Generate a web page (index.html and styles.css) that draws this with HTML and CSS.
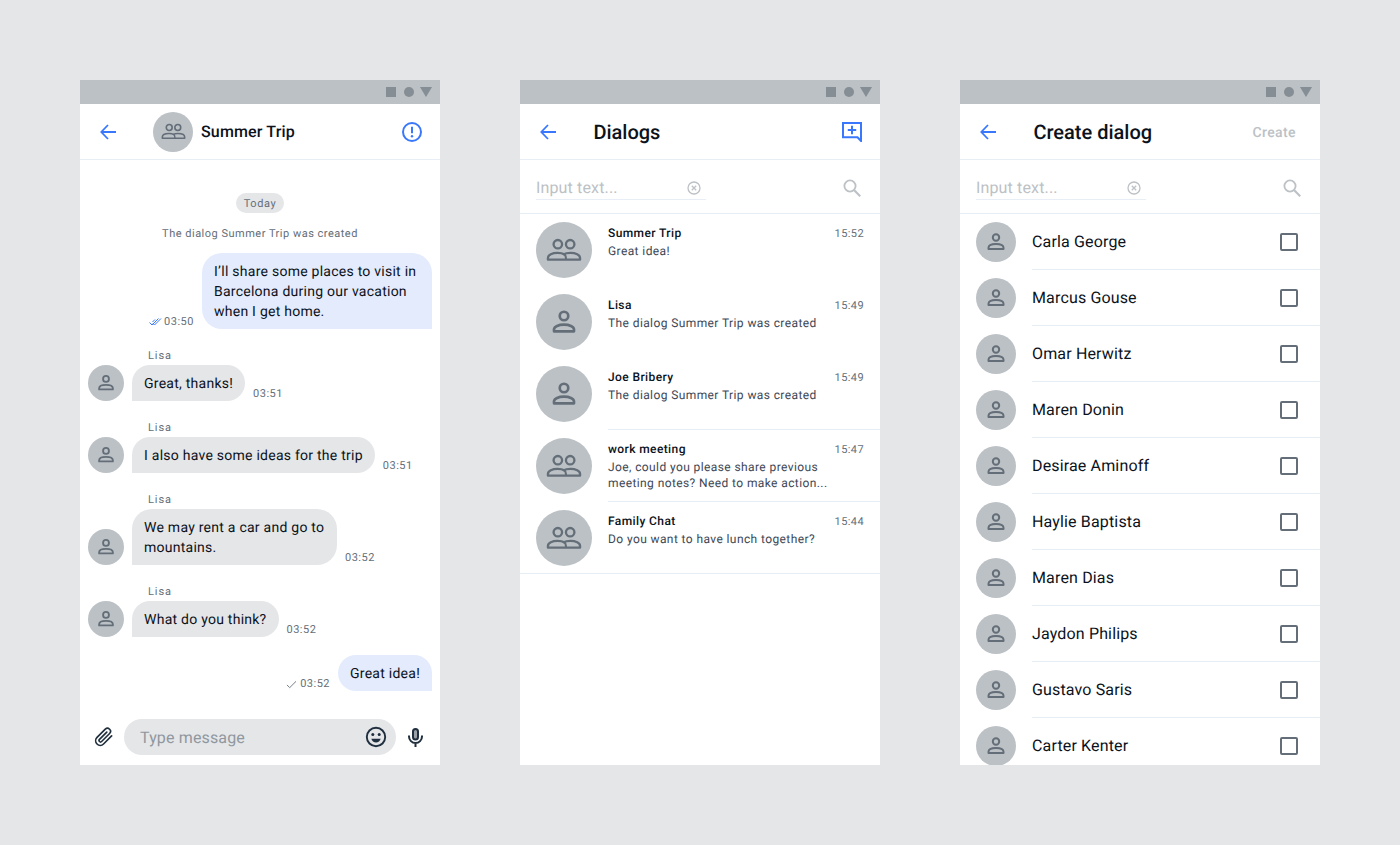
FILE: index.html
```html
<!DOCTYPE html>
<html lang="en">
<head>
<meta charset="utf-8">
<title>Chat screens</title>
<link rel="stylesheet" href="styles.css">
</head>
<body>
<svg class="defs" width="0" height="0" aria-hidden="true">
  <symbol id="person" viewBox="0 0 24 24">
    <circle cx="12" cy="7.500" r="3.200" fill="none" stroke="currentColor" stroke-width="2"/>
    <path d="M4.500 19v-1.300c0-2.400 3.600-3.700 7.500-3.700s7.500 1.300 7.500 3.700V19z" fill="none" stroke="currentColor" stroke-width="2" stroke-linejoin="round"/>
  </symbol>
  <symbol id="group" viewBox="0 0 28 28">
    <circle cx="9.200" cy="9.500" r="3.300" fill="none" stroke="currentColor" stroke-width="1.800"/>
    <circle cx="18.800" cy="9.500" r="3.300" fill="none" stroke="currentColor" stroke-width="1.800"/>
    <path d="M1.500 21.500v-1.300c0-2.500 3.500-3.900 7.500-3.900 2.400 0 4.300.5 5 1 .7-.5 2.600-1 5-1 4 0 7.500 1.400 7.500 3.900v1.300z" fill="none" stroke="currentColor" stroke-width="1.800" stroke-linejoin="round"/>
    <path d="M14 17.300c1 .6 1.500 1.500 1.500 2.900v1.300" fill="none" stroke="currentColor" stroke-width="1.600"/>
  </symbol>
  <symbol id="back" viewBox="0 0 16 16">
    <path d="M16 8H1.500M8 1 1.300 8 8 15" fill="none" stroke="currentColor" stroke-width="1.800"/>
  </symbol>
  <symbol id="search" viewBox="0 0 18 18">
    <circle cx="7" cy="7" r="5.600" fill="none" stroke="currentColor" stroke-width="1.800"/>
    <path d="M11 11 17.200 17.200" fill="none" stroke="currentColor" stroke-width="2.100"/>
  </symbol>
  <symbol id="clear" viewBox="0 0 14 14">
    <circle cx="7" cy="7" r="6" fill="none" stroke="currentColor" stroke-width="1.300"/>
    <path d="M4.800 4.800 9.200 9.200M9.200 4.800 4.800 9.200" fill="none" stroke="currentColor" stroke-width="1.300"/>
  </symbol>
  <symbol id="tick" viewBox="0 0 12 10">
    <path d="M1 5.500 4 8.500 11 1.500" fill="none" stroke="currentColor" stroke-width="1"/>
  </symbol>
  <symbol id="ticks" viewBox="0 0 14 10">
    <path d="M.5 5.500 3 8 9.500 1.500M4 6.500 5.500 8 12 1.500M3.500 5 6 2.500" fill="none" stroke="currentColor" stroke-width="1"/>
  </symbol>
</svg>

<main class="stage">

  <section class="phone">
    <div class="status"><span class="st-square"></span><span class="st-circle"></span><span class="st-tri"></span></div>
    <header class="head head-chat">
      <svg class="ic-back"><use href="#back"/></svg>
      <span class="avatar av-40"><svg class="gl-25"><use href="#group"/></svg></span>
      <h2 class="chat-title">Summer Trip</h2>
      <svg class="ic-info" viewBox="0 0 20 20">
        <circle cx="10" cy="10" r="9" fill="none" stroke="currentColor" stroke-width="2"/>
        <path d="M10 4.800v6.400" fill="none" stroke="currentColor" stroke-width="2"/>
        <circle cx="10" cy="14.300" r="1.200" fill="currentColor"/>
      </svg>
    </header>
    <div class="thread">
      <div class="date-row"><span class="date-pill">Today</span></div>
      <p class="system">The dialog Summer Trip was created</p>

      <div class="msg-out">
        <span class="time"><svg class="ticks"><use href="#ticks"/></svg>03:50</span>
        <div class="bubble out">I’ll share some places to visit in Barcelona during our vacation when I get home.</div>
      </div>

      <div class="msg-in">
        <span class="avatar av-36"><svg class="gl-22"><use href="#person"/></svg></span>
        <div class="msg-body">
          <span class="sender">Lisa</span>
          <div class="bubble-line"><div class="bubble in">Great, thanks!</div><span class="time">03:51</span></div>
        </div>
      </div>

      <div class="msg-in">
        <span class="avatar av-36"><svg class="gl-22"><use href="#person"/></svg></span>
        <div class="msg-body">
          <span class="sender">Lisa</span>
          <div class="bubble-line"><div class="bubble in">I also have some ideas for the trip</div><span class="time">03:51</span></div>
        </div>
      </div>

      <div class="msg-in">
        <span class="avatar av-36"><svg class="gl-22"><use href="#person"/></svg></span>
        <div class="msg-body">
          <span class="sender">Lisa</span>
          <div class="bubble-line"><div class="bubble in w-205">We may rent a car and go to mountains.</div><span class="time">03:52</span></div>
        </div>
      </div>

      <div class="msg-in">
        <span class="avatar av-36"><svg class="gl-22"><use href="#person"/></svg></span>
        <div class="msg-body">
          <span class="sender">Lisa</span>
          <div class="bubble-line"><div class="bubble in">What do you think?</div><span class="time">03:52</span></div>
        </div>
      </div>

      <div class="msg-out">
        <span class="time"><svg class="tick"><use href="#tick"/></svg>03:52</span>
        <div class="bubble out">Great idea!</div>
      </div>
    </div>
    <footer class="composer">
      <svg class="ic-clip" viewBox="0 0 24 24"><path d="M20.300 10.800 11.500 19.600a5 5 0 0 1-7.100-7.100l9-9a3.300 3.300 0 0 1 4.700 4.700l-8.700 8.700a1.600 1.600 0 0 1-2.300-2.300l7.900-7.900" fill="none" stroke="currentColor" stroke-width="1.800" stroke-linecap="round"/></svg>
      <div class="composer-input">
        <span class="composer-text">Type message</span>
        <svg class="ic-emoji" viewBox="0 0 22 22">
          <circle cx="11" cy="11" r="9.200" fill="none" stroke="currentColor" stroke-width="1.900"/>
          <circle cx="7.800" cy="8.500" r="1.500" fill="currentColor"/>
          <circle cx="14.200" cy="8.500" r="1.500" fill="currentColor"/>
          <path d="M6.300 12.800h9.400c-.6 2.300-2.500 3.700-4.700 3.700s-4.100-1.400-4.700-3.700z" fill="currentColor"/>
        </svg>
      </div>
      <svg class="ic-mic" viewBox="0 0 15 19">
        <rect x="5" y="1" width="5" height="10.500" rx="2.500" fill="currentColor" fill-opacity=".45" stroke="currentColor" stroke-width="2"/>
        <path d="M1 7.500v1a6.500 6.500 0 0 0 13 0v-1M7.500 15v4" fill="none" stroke="currentColor" stroke-width="2"/>
      </svg>
    </footer>
  </section>

  <section class="phone">
    <div class="status"><span class="st-square"></span><span class="st-circle"></span><span class="st-tri"></span></div>
    <header class="head">
      <svg class="ic-back"><use href="#back"/></svg>
      <h1 class="title">Dialogs</h1>
      <svg class="ic-new" viewBox="0 0 20 20">
        <path d="M1 1h18v18l-3.500-3.800H1z" fill="none" stroke="currentColor" stroke-width="2"/>
        <path d="M10 3.800v8.400M5.800 8h8.400" fill="none" stroke="currentColor" stroke-width="2"/>
      </svg>
    </header>
    <div class="searchbar">
      <div class="search-field"><span class="search-text">Input text...</span><svg class="ic-clear"><use href="#clear"/></svg></div>
      <svg class="ic-search"><use href="#search"/></svg>
    </div>
    <ul class="dialogs">
      <li class="dialog">
        <span class="avatar av-56"><svg class="gl-36"><use href="#group"/></svg></span>
        <div class="dialog-main">
          <div class="dialog-top"><span class="dialog-name">Summer Trip</span><span class="dialog-time">15:52</span></div>
          <p class="dialog-text">Great idea!</p>
        </div>
      </li>
      <li class="dialog">
        <span class="avatar av-56"><svg class="gl-32"><use href="#person"/></svg></span>
        <div class="dialog-main">
          <div class="dialog-top"><span class="dialog-name">Lisa</span><span class="dialog-time">15:49</span></div>
          <p class="dialog-text">The dialog Summer Trip was created</p>
        </div>
      </li>
      <li class="dialog">
        <span class="avatar av-56"><svg class="gl-32"><use href="#person"/></svg></span>
        <div class="dialog-main line">
          <div class="dialog-top"><span class="dialog-name">Joe Bribery</span><span class="dialog-time">15:49</span></div>
          <p class="dialog-text">The dialog Summer Trip was created</p>
        </div>
      </li>
      <li class="dialog">
        <span class="avatar av-56"><svg class="gl-36"><use href="#group"/></svg></span>
        <div class="dialog-main line">
          <div class="dialog-top"><span class="dialog-name">work meeting</span><span class="dialog-time">15:47</span></div>
          <p class="dialog-text">Joe, could you please share previous<br>meeting notes? Need to make action...</p>
        </div>
      </li>
      <li class="dialog dialog-last">
        <span class="avatar av-56"><svg class="gl-36"><use href="#group"/></svg></span>
        <div class="dialog-main">
          <div class="dialog-top"><span class="dialog-name">Family Chat</span><span class="dialog-time">15:44</span></div>
          <p class="dialog-text">Do you want to have lunch together?</p>
        </div>
      </li>
    </ul>
  </section>

  <section class="phone">
    <div class="status"><span class="st-square"></span><span class="st-circle"></span><span class="st-tri"></span></div>
    <header class="head">
      <svg class="ic-back"><use href="#back"/></svg>
      <h1 class="title">Create dialog</h1>
      <span class="create">Create</span>
    </header>
    <div class="searchbar">
      <div class="search-field"><span class="search-text">Input text...</span><svg class="ic-clear"><use href="#clear"/></svg></div>
      <svg class="ic-search"><use href="#search"/></svg>
    </div>
    <ul class="people">
      <li class="person"><span class="avatar av-40"><svg class="gl-24"><use href="#person"/></svg></span><div class="person-main"><span class="person-name">Carla George</span><span class="check"></span></div></li>
      <li class="person"><span class="avatar av-40"><svg class="gl-24"><use href="#person"/></svg></span><div class="person-main"><span class="person-name">Marcus Gouse</span><span class="check"></span></div></li>
      <li class="person"><span class="avatar av-40"><svg class="gl-24"><use href="#person"/></svg></span><div class="person-main"><span class="person-name">Omar Herwitz</span><span class="check"></span></div></li>
      <li class="person"><span class="avatar av-40"><svg class="gl-24"><use href="#person"/></svg></span><div class="person-main"><span class="person-name">Maren Donin</span><span class="check"></span></div></li>
      <li class="person"><span class="avatar av-40"><svg class="gl-24"><use href="#person"/></svg></span><div class="person-main"><span class="person-name">Desirae Aminoff</span><span class="check"></span></div></li>
      <li class="person"><span class="avatar av-40"><svg class="gl-24"><use href="#person"/></svg></span><div class="person-main"><span class="person-name">Haylie Baptista</span><span class="check"></span></div></li>
      <li class="person"><span class="avatar av-40"><svg class="gl-24"><use href="#person"/></svg></span><div class="person-main"><span class="person-name">Maren Dias</span><span class="check"></span></div></li>
      <li class="person"><span class="avatar av-40"><svg class="gl-24"><use href="#person"/></svg></span><div class="person-main"><span class="person-name">Jaydon Philips</span><span class="check"></span></div></li>
      <li class="person"><span class="avatar av-40"><svg class="gl-24"><use href="#person"/></svg></span><div class="person-main"><span class="person-name">Gustavo Saris</span><span class="check"></span></div></li>
      <li class="person"><span class="avatar av-40"><svg class="gl-24"><use href="#person"/></svg></span><div class="person-main"><span class="person-name">Carter Kenter</span><span class="check"></span></div></li>
    </ul>
  </section>

</main>
</body>
</html>
```

FILE: styles.css
```css
* { box-sizing: border-box; }
html, body { margin: 0; height: 100%; }
body {
  background: #e4e6e8;
  font-family: Roboto, "Liberation Sans", sans-serif;
  color: #0b121b;
  overflow: hidden;
  text-rendering: geometricPrecision;
}
.defs { display: block; height: 0; }
ul { list-style: none; margin: 0; padding: 0; }
p, h1, h2 { margin: 0; }

.stage {
  display: flex;
  gap: 80px;
  padding: 80px 80px 0;
}
.phone {
  width: 360px;
  height: 685px;
  background: #fff;
  display: flex;
  flex-direction: column;
  overflow: hidden;
}

.status {
  height: 24px;
  flex: none;
  background: #bcc1c5;
  display: flex;
  align-items: center;
  justify-content: flex-end;
  padding-right: 8px;
}
.st-square { width: 10px; height: 10px; background: #646e78; opacity: .62; }
.st-circle { width: 10px; height: 10px; margin: 0 6px 0 8px; border-radius: 50%; background: #646e78; opacity: .62; }
.st-tri {
  width: 0; height: 0;
  border-left: 6px solid transparent;
  border-right: 6px solid transparent;
  border-top: 10px solid #646e78;
  opacity: .62;
}

.head {
  height: 56px;
  flex: none;
  display: flex;
  align-items: center;
  padding: 0 16px 0 20px;
  border-bottom: 1px solid #e7eef6;
  color: #3978fc;
}
.ic-back { width: 16px; height: 16px; flex: none; color: #3978fc; }
.title {
  font-size: 20px;
  font-weight: 500;
  line-height: 24px;
  color: #0b121b;
  margin-left: 37.4px;
  flex: 1;
}
.chat-title {
  font-size: 16px;
  font-weight: 500;
  line-height: 24px;
  letter-spacing: .15px;
  color: #0b121b;
  margin-left: 8px;
  flex: 1;
}
.head-chat .avatar { margin-left: 37px; }
.ic-info { width: 20px; height: 20px; flex: none; margin-right: 2px; }
.ic-new { width: 20px; height: 20px; flex: none; margin-right: 2px; }
.create {
  padding-top: 2px;
  font-size: 14px;
  font-weight: 500;
  letter-spacing: .4px;
  color: #bcc1c5;
  margin-right: 8px;
}

.avatar {
  flex: none;
  border-radius: 50%;
  background: #bcc1c5;
  color: #646e78;
  display: flex;
  align-items: center;
  justify-content: center;
}
.av-36 { width: 36px; height: 36px; }
.av-40 { width: 40px; height: 40px; }
.av-56 { width: 56px; height: 56px; }
.gl-22 { width: 22px; height: 22px; }
.gl-24 { width: 24px; height: 24px; }
.gl-25 { width: 25px; height: 25px; }
.gl-32 { width: 32px; height: 32px; }
.gl-36 { width: 36px; height: 36px; }

.thread {
  flex: 1;
  min-height: 0;
  padding: 33px 8px 0;
  display: flex;
  flex-direction: column;
}
.date-row { display: flex; justify-content: center; }
.date-pill {
  width: 48px;
  height: 20px;
  text-align: center;
  border-radius: 10px;
  background: #e4e6e8;
  font-size: 11px;
  letter-spacing: .6px;
  line-height: 21px;
  color: #646e78;
}
.system {
  margin-top: 12px;
  height: 16px;
  text-align: center;
  font-size: 11px;
  line-height: 18px;
  letter-spacing: .5px;
  color: #646e78;
}
.msg-out {
  margin-top: 12px;
  display: flex;
  justify-content: flex-end;
  align-items: flex-end;
  gap: 8px;
}
.msg-in + .msg-out { margin-top: 18px; }
.msg-in {
  margin-top: 18px;
  display: flex;
  align-items: flex-end;
  gap: 8px;
}
.msg-body { display: flex; flex-direction: column; }
.sender {
  height: 16px;
  margin: 0 0 2px 16px;
  font-size: 11px;
  line-height: 18px;
  letter-spacing: .9px;
  color: #646e78;
}
.bubble-line { display: flex; align-items: flex-end; gap: 8px; }
.bubble {
  padding: 9px 12px 7px;
  font-size: 14px;
  line-height: 20px;
  letter-spacing: .25px;
  color: #0b121b;
}
.bubble.in { background: #e4e6e8; border-radius: 20px 20px 20px 0; }
.bubble.out { background: #e4ebfc; border-radius: 20px 20px 0 20px; }
.msg-out .bubble.out { max-width: 230px; }
.w-205 { width: 205px; }
.time {
  display: flex;
  align-items: center;
  height: 16px;
  padding-top: 2px;
  font-size: 11px;
  line-height: 14px;
  letter-spacing: .5px;
  color: #646e78;
  white-space: nowrap;
}
.ticks { width: 14px; height: 10px; margin-right: 1px; color: #3978fc; }
.tick { width: 11px; height: 9px; margin-right: 3px; color: #646e78; }

.composer {
  height: 54px;
  flex: none;
  display: flex;
  align-items: center;
  padding: 0 16px 2px 13px;
  color: #202f3e;
}
.ic-clip { width: 22px; height: 22px; flex: none; }
.composer-input {
  margin-left: 9px;
  width: 272px;
  height: 36px;
  flex: none;
  border-radius: 18px;
  background: #e4e6e8;
  display: flex;
  align-items: center;
  justify-content: space-between;
  padding: 0 9px 0 16px;
}
.composer-text { font-size: 16px; letter-spacing: .15px; color: #90979f; }
.ic-emoji { width: 22px; height: 22px; }
.ic-mic { width: 15px; height: 19px; flex: none; margin-left: 12px; }

.searchbar {
  height: 54px;
  flex: none;
  display: flex;
  align-items: center;
  justify-content: space-between;
  padding: 0 19px 0 16px;
  border-bottom: 1px solid #e7eef6;
  color: #bcc1c5;
}
.search-field {
  width: 170px;
  height: 26px;
  padding: 2px 5px 0 0;
  display: flex;
  align-items: center;
  justify-content: space-between;
  border-bottom: 1px solid #e7eef6;
}
.search-text { font-size: 16px; letter-spacing: .15px; color: #bcc1c5; }
.ic-clear { width: 14px; height: 14px; margin-top: 2px; }
.ic-search { width: 18px; height: 18px; margin-top: 2px; }

.dialog {
  height: 72px;
  display: flex;
  align-items: flex-start;
  padding-left: 16px;
}
.dialog .avatar { margin-top: 8px; }
.dialog-main {
  flex: 1;
  height: 72px;
  margin-left: 16px;
  padding: 10px 16px 0 0;
}
.dialog-main.line { border-bottom: 1px solid #e7eef6; }
.dialog-last { width: 100%; border-bottom: 1px solid #e7eef6; }
.dialog-top { display: flex; justify-content: space-between; align-items: center; height: 18px; }
.dialog-name {
  font-size: 12px;
  font-weight: 500;
  letter-spacing: .4px;
  color: #0b121b;
}
.dialog-time { font-size: 11px; letter-spacing: .4px; color: #646e78; }
.dialog-text {
  font-size: 12px;
  line-height: 16px;
  letter-spacing: .4px;
  color: #3d4754;
  margin-top: 1px;
}

.person {
  height: 56px;
  display: flex;
  align-items: center;
  padding-left: 16px;
  flex: none;
}
.person-main {
  flex: 1;
  height: 56px;
  margin-left: 16px;
  display: flex;
  align-items: center;
  justify-content: space-between;
  padding-right: 22px;
  border-bottom: 1px solid #e7eef6;
}
.person-name {
  font-size: 16px;
  letter-spacing: .15px;
  color: #0b121b;
}
.check {
  width: 18px;
  height: 18px;
  border: 2px solid #646e78;
  border-radius: 2px;
}
```
